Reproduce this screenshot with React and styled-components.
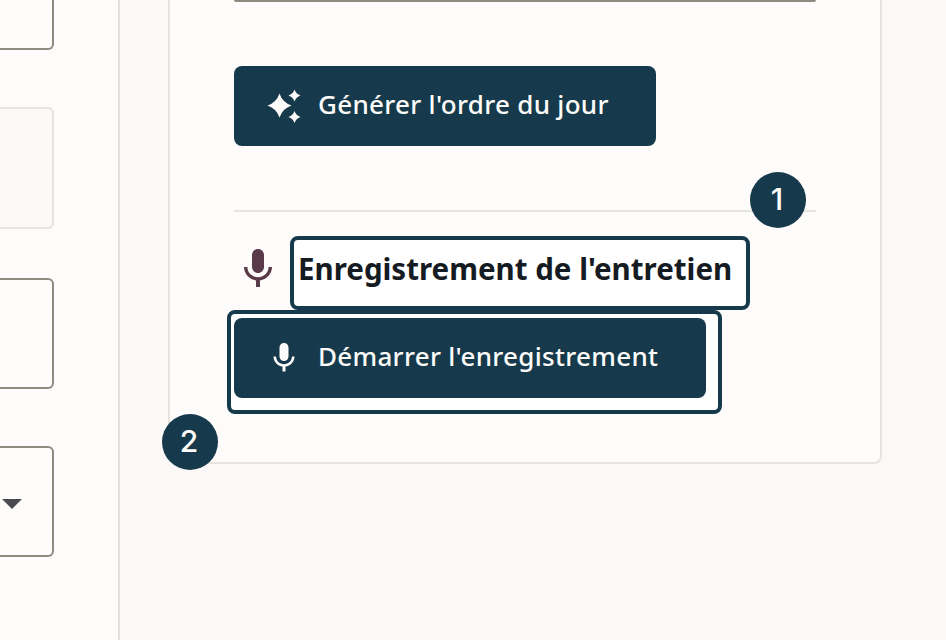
import React from 'react';
import styled, { createGlobalStyle } from 'styled-components';

const GlobalStyle = createGlobalStyle`
	html, body {
		margin: 0;
		padding: 0;
		background: #faf9f7;
	}
	* {
		box-sizing: border-box;
	}
`;

const MicIcon = ({ size, color, className }) => (
	<svg className={className} width={size} height={size} viewBox="0 0 24 24" fill={color}>
		<path d="M12 14c1.66 0 3-1.34 3-3V5c0-1.66-1.34-3-3-3S9 3.34 9 5v6c0 1.66 1.34 3 3 3zm5.3-3c0 3-2.54 5.1-5.3 5.1S6.7 14 6.7 11H5c0 3.41 2.72 6.23 6 6.72V21h2v-3.28c3.28-.48 6-3.3 6-6.72h-1.7z" />
	</svg>
);

const SparkleIcon = () => (
	<svg width="36" height="36" viewBox="0 0 36 36" fill="#fdfcfa" style={{ flexShrink: 0 }}>
		<path d="M13.500 5.500Q16.500 14.500 25.500 17.500 16.500 20.500 13.500 29.500 10.500 20.500 1.500 17.500 10.500 14.500 13.500 5.500z" />
		<path d="M28.500 1.500Q30 6 34.500 7.500 30 9 28.500 13.500 27 9 22.500 7.500 27 6 28.500 1.500z" />
		<path d="M28.500 23Q30 27.500 34.500 29 30 30.500 28.500 35 27 30.500 22.500 29 27 27.500 28.500 23z" />
	</svg>
);

const App = () => (
	<Page>
		<GlobalStyle />
		<Sidebar>
			<Field $height={50} $gap={0} />
			<Field $height={122} $gap={57} $disabled />
			<Field $height={111} $gap={49} />
			<Field $height={111} $gap={57}>
				<Caret />
			</Field>
		</Sidebar>
		<Main>
			<Card>
				<InputEdge />
				<PrimaryButton $width={422} $top={64}>
					<SparkleIcon />
					<ButtonLabel>Générer l'ordre du jour</ButtonLabel>
				</PrimaryButton>
				<Divider>
					<Badge $top={-38} $right={10}>1</Badge>
				</Divider>
				<TitleRow>
					<TitleMic size={48} color="#5a3a48" />
					<Title>Enregistrement de l'entretien</Title>
				</TitleRow>
				<Highlight>
					<PrimaryButton $width={472} $top={0}>
						<MicIcon size={36} color="#fdfcfa" />
						<ButtonLabel>Démarrer l'enregistrement</ButtonLabel>
					</PrimaryButton>
				</Highlight>
				<Badge $bottom={-8} $left={-8}>2</Badge>
			</Card>
		</Main>
	</Page>
);

const Page = styled.div`
	display: flex;
	width: 946px;
	height: 640px;
	overflow: hidden;
	background: #faf9f7;
	font-family: 'Noto Sans', 'Open Sans', sans-serif;
`;

const Sidebar = styled.aside`
	width: 120px;
	height: 100%;
	flex-shrink: 0;
	padding-right: 64px;
	background: #fdfcfa;
	border-right: 2px solid #e3e1dd;
`;

const Field = styled.div`
	position: relative;
	height: ${(p) => p.$height}px;
	margin-top: ${(p) => p.$gap}px;
	background: ${(p) => (p.$disabled ? '#faf9f7' : '#fdfcfa')};
	border: 2px solid ${(p) => (p.$disabled ? '#e6e4e0' : '#8d8b7f')};
	border-left: none;
	border-top-width: ${(p) => (p.$gap === 0 ? 0 : 2)}px;
	border-radius: ${(p) => (p.$gap === 0 ? '0 0 6px 0' : '0 6px 6px 0')};
`;

const Caret = styled.span`
	position: absolute;
	top: 51px;
	left: 2px;
	width: 0;
	height: 0;
	border-left: 10px solid transparent;
	border-right: 10px solid transparent;
	border-top: 10px solid #4b4a50;
`;

const Main = styled.main`
	flex: 1;
	padding-left: 48px;
`;

const Card = styled.section`
	position: relative;
	width: 714px;
	height: 464px;
	padding-left: 64px;
	background: #fdfcfa;
	border: 2px solid #e6e4df;
	border-top: none;
	border-radius: 0 0 8px 8px;
`;

const InputEdge = styled.div`
	width: 582px;
	height: 2px;
	background: #8d8b7f;
	border-radius: 0 0 6px 6px;
`;

const PrimaryButton = styled.button`
	display: flex;
	align-items: center;
	gap: 16px;
	width: ${(p) => p.$width}px;
	height: 80px;
	margin-top: ${(p) => p.$top}px;
	padding: 0 32px;
	background: #163a4b;
	color: #fdfcfa;
	border: none;
	border-radius: 8px;
	font-family: inherit;
	font-size: 26px;
	font-weight: 500;
	letter-spacing: 0.3px;
	white-space: nowrap;
`;

const ButtonLabel = styled.span`
	margin-bottom: 4px;
`;

const Divider = styled.div`
	position: relative;
	width: 582px;
	height: 2px;
	margin-top: 64px;
	background: #e6e4df;
`;

const Badge = styled.span`
	position: absolute;
	top: ${(p) => (p.$top !== undefined ? `${p.$top}px` : 'auto')};
	right: ${(p) => (p.$right !== undefined ? `${p.$right}px` : 'auto')};
	bottom: ${(p) => (p.$bottom !== undefined ? `${p.$bottom}px` : 'auto')};
	left: ${(p) => (p.$left !== undefined ? `${p.$left}px` : 'auto')};
	display: flex;
	align-items: center;
	justify-content: center;
	width: 56px;
	height: 56px;
	padding: 0 2px 2px 0;
	background: #163a4b;
	color: #fdfcfa;
	border-radius: 50%;
	font-family: Inter, sans-serif;
	font-size: 30px;
	font-weight: 500;
`;

const TitleRow = styled.div`
	display: flex;
	align-items: center;
	gap: 8px;
	margin-top: 24px;
	height: 74px;
`;

const TitleMic = styled(MicIcon)`
	flex-shrink: 0;
	margin-bottom: 9px;
`;

const Title = styled.h2`
	display: flex;
	align-items: center;
	width: 460px;
	height: 74px;
	margin: 0;
	padding: 0 4px 10px;
	background: #fff;
	color: #151b22;
	border: 4px solid #163a4b;
	border-radius: 8px;
	font-size: 29.5px;
	font-weight: 700;
	white-space: nowrap;
`;

const Highlight = styled.div`
	width: 495px;
	height: 104px;
	margin-left: -7px;
	padding: 4px 0 0 3px;
	background: #fff;
	border: 4px solid #163a4b;
	border-radius: 8px;
`;

export default App;
